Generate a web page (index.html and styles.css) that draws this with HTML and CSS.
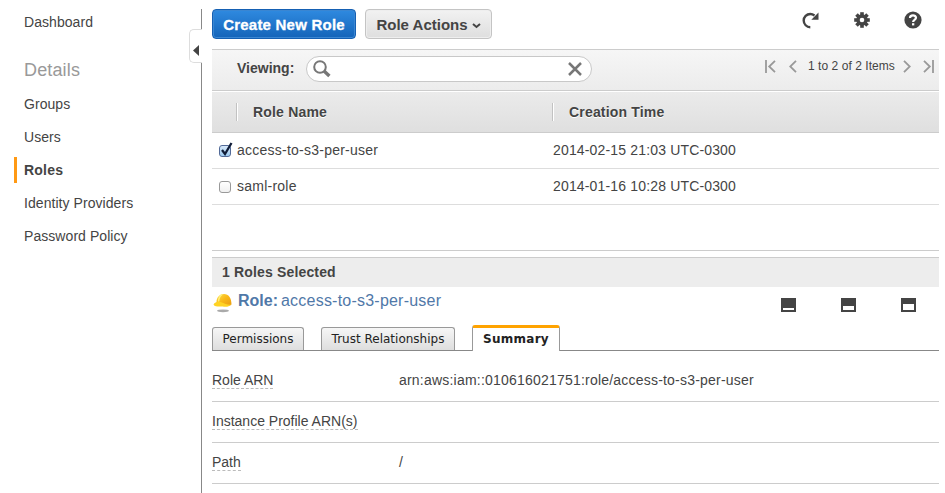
FILE: index.html
```html
<!DOCTYPE html>
<html lang="en">
<head>
<meta charset="utf-8">
<title>IAM Roles</title>
<link rel="stylesheet" href="styles.css">
</head>
<body>
<div class="app">
  <nav class="sidebar">
    <a class="nav-item">Dashboard</a>
    <h2 class="nav-title">Details</h2>
    <a class="nav-item">Groups</a>
    <a class="nav-item">Users</a>
    <a class="nav-item active">Roles</a>
    <a class="nav-item">Identity Providers</a>
    <a class="nav-item">Password Policy</a>
    <div class="collapse"><svg width="6" height="11" viewBox="0 0 6 11"><path d="M6 0v11L0 5.5z" fill="#444"/></svg></div>
  </nav>
  <main class="content">
    <header class="actions">
      <button class="btn primary">Create New Role</button>
      <button class="btn secondary">Role Actions<svg width="9" height="6" viewBox="0 0 9 6"><path d="M1 1l3.5 3L8 1" fill="none" stroke="#444" stroke-width="2"/></svg></button>
      <div class="tools">
        <svg width="17" height="17" viewBox="0 0 17 17"><path d="M8.3 15.2A6.6 6.6 0 0 1 8.3 2Q10.500 2 12.500 3.500" fill="none" stroke="#444" stroke-width="2.4"/><path d="M16.5 0.5v7.2H9.3z" fill="#444"/></svg>
        <svg width="16" height="16" viewBox="-8 -8 16 16"><g fill="#444"><path d="M-1.8-7.8h3.6v15.6h-3.6z"/><path d="M-1.8-7.8h3.6v15.6h-3.6z" transform="rotate(45)"/><path d="M-1.8-7.8h3.6v15.6h-3.6z" transform="rotate(90)"/><path d="M-1.8-7.8h3.6v15.6h-3.6z" transform="rotate(135)"/><circle r="5.7"/></g><circle r="2.3" fill="#fff"/></svg>
        <svg width="18" height="18" viewBox="0 0 18 18"><circle cx="9" cy="9" r="8.6" fill="#444"/><path d="M6 7C6 3.5 12 3.6 12 6.8C12 9 9.1 8.8 9.1 11" fill="none" stroke="#fff" stroke-width="2.2"/><path d="M8 12.2h2.3v2.2H8z" fill="#fff"/></svg>
      </div>
    </header>
    <div class="filter">
      <label class="viewing">Viewing:</label>
      <div class="search">
        <svg width="18" height="18" viewBox="0 0 18 18"><circle cx="7" cy="7" r="5.8" fill="none" stroke="#777" stroke-width="2"/><path d="M11 11l5.4 5" stroke="#777" stroke-width="3.4"/></svg>
        <svg width="14" height="14" viewBox="0 0 14 14"><path d="M1 1l12 12M13 1L1 13" stroke="#777" stroke-width="2.5"/></svg>
      </div>
      <div class="pager">
        <svg width="11" height="13" viewBox="0 0 11 13"><path d="M1 0v13M10 .8L4.2 6.5 10 12.2" fill="none" stroke="#999" stroke-width="1.8"/></svg>
        <svg class="prev" width="8" height="13" viewBox="0 0 8 13"><path d="M7 .8L1.2 6.5 7 12.2" fill="none" stroke="#999" stroke-width="1.8"/></svg>
        <span class="count">1 to 2 of 2 Items</span>
        <svg class="next" width="8" height="13" viewBox="0 0 8 13"><path d="M1 .8l5.8 5.7L1 12.2" fill="none" stroke="#999" stroke-width="1.8"/></svg>
        <svg width="11" height="13" viewBox="0 0 11 13"><path d="M10 0v13M1 .8l5.8 5.7L1 12.2" fill="none" stroke="#999" stroke-width="1.8"/></svg>
      </div>
    </div>
    <div class="table-head">
      <div class="th">Role Name</div>
      <div class="th">Creation Time</div>
    </div>
    <div class="table-body">
      <div class="row"><span class="check checked"><svg width="14" height="15" viewBox="0 0 14 15"><path d="M3 8l3 4L12.5 1" fill="none" stroke="#101c38" stroke-width="2.3"/></svg></span><span class="name">access-to-s3-per-user</span><span class="date">2014-02-15 21:03 UTC-0300</span></div>
      <div class="row"><span class="check"></span><span class="name">saml-role</span><span class="date">2014-01-16 10:28 UTC-0300</span></div>
    </div>
    <div class="selected-bar">1 Roles Selected</div>
    <div class="role-line">
      <svg class="hat" width="19" height="20" viewBox="0 0 19 20"><defs><linearGradient id="dome" x1="0" y1="0" x2="1" y2="1"><stop offset="0" stop-color="#ffe04a"/><stop offset=".5" stop-color="#f9b817"/><stop offset="1" stop-color="#e89a12"/></linearGradient></defs><ellipse cx="10" cy="17.8" rx="6" ry="1.4" fill="#aaa"/><path d="M3.5 9C3.5 4 7 1 11 1c4.500 0 7.500 4 7.500 10.500-1.500 1.500-4 1.500-6.500.500L3 11.500z" fill="url(#dome)"/><path d="M.5 11.500C2 8.500 6 8 9 9.500c3 1.500 6 2.500 9 2-1.500 2-4 2.500-7 2.200C7 13.300 2 14.500.5 11.500z" fill="#ffd323"/><path d="M9 1.300C6.500 3 5.600 5.500 5.600 8.500" fill="none" stroke="#fff07a" stroke-width="1.500"/></svg>
      <div class="role-title"><b>Role:</b><span>access-to-s3-per-user</span></div>
      <div class="panes">
        <svg width="15" height="14"><path d="M0 0h15v14H0z" fill="#444"/><path d="M2 10h11v2H2z" fill="#fff"/></svg>
        <svg width="15" height="14"><path d="M0 0h15v14H0z" fill="#444"/><path d="M2 8h11v4H2z" fill="#fff"/></svg>
        <svg width="15" height="14"><path d="M0 0h15v14H0z" fill="#444"/><path d="M2 6h11v6H2z" fill="#fff"/></svg>
      </div>
    </div>
    <div class="tabs">
      <div class="tab permissions">Permissions</div>
      <div class="tab trust">Trust Relationships</div>
      <div class="tab current">Summary</div>
    </div>
    <dl class="details">
      <div class="detail"><dt><span>Role ARN</span></dt><dd>arn:aws:iam::010616021751:role/access-to-s3-per-user</dd></div>
      <div class="detail"><dt><span>Instance Profile ARN(s)</span></dt><dd></dd></div>
      <div class="detail"><dt><span>Path</span></dt><dd>/</dd></div>
    </dl>
  </main>
</div>
</body>
</html>
```
FILE: styles.css
```css
* { box-sizing: border-box; }
body {
  margin: 0;
  background: #fff;
  color: #444;
  font: 14px/20px "Liberation Sans", Arial, sans-serif;
}
svg { display: block; flex: none; }
.app { display: flex; height: 493px; overflow: hidden; }

.sidebar {
  position: relative;
  width: 202px;
  flex: none;
  margin-top: 9px;
  border-right: 1px solid #888;
}
.nav-item {
  display: block;
  height: 26px;
  margin: 0 0 7px 14px;
  padding-left: 10px;
  line-height: 26px;
  letter-spacing: .06px;
}
.nav-item.active { border-left: 3px solid #ff9914; padding-left: 7px; font-weight: bold; letter-spacing: .2px; }
.nav-title {
  margin: 22px 0 8px 24px;
  font-size: 18px;
  line-height: 26px;
  font-weight: normal;
  letter-spacing: .15px;
  color: #999;
}
.collapse {
  position: absolute;
  left: 189px;
  top: 20px;
  width: 13px;
  height: 34px;
  padding: 15px 0 0 3px;
  border: 1px solid #ddd;
  border-right: 0;
  border-radius: 5px 0 0 5px;
  background: #fff;
}

.content { width: 727px; margin-left: 10px; }
.actions { display: flex; height: 40px; margin-top: 9px; align-items: flex-start; }
.btn {
  display: flex;
  align-items: center;
  justify-content: center;
  height: 30px;
  padding: 2px 0 0;
  border-radius: 4px;
  font: bold 15px/28px "Liberation Sans", Arial, sans-serif;
}
.primary {
  width: 144px;
  border: 1px solid #1560b3;
  background: linear-gradient(#2f8ae0, #1464b9);
  box-shadow: inset 0 0 0 1px #3a86d2;
  color: #fff;
  letter-spacing: .22px;
  -webkit-text-stroke: .3px #fff;
}
.secondary {
  width: 127px;
  margin-left: 9px;
  border: 1px solid #c4c4c4;
  background: linear-gradient(#f2f2f2, #dedede);
  box-shadow: inset 0 0 0 1px #eee;
  color: #444;
}
.secondary svg { margin: 2px 0 0 4px; }
.tools { display: flex; margin-left: auto; align-items: center; height: 22px; }
.tools svg + svg { margin-left: 35px; }
.tools svg:last-child { margin: 0 17px 0 34px; }

.filter {
  display: flex;
  align-items: flex-start;
  height: 42px;
  padding-left: 25px;
  border-top: 1px solid #ccc;
  border-bottom: 1px solid #ccc;
  background: linear-gradient(#f6f6f6, #ececec);
}
.viewing { width: 69px; font-weight: bold; line-height: 37px; }
.search {
  display: flex;
  align-items: center;
  justify-content: space-between;
  width: 286px;
  height: 26px;
  margin-top: 6px;
  padding: 0 9px 0 6px;
  border: 1px solid #c8c8c8;
  border-radius: 13px;
  background: #fff;
}
.pager { display: flex; align-items: center; height: 32px; margin-left: auto; padding-right: 5px; }
.prev { margin-left: 13px; }
.count { width: 87px; margin: 0 8px 0 11px; font-size: 12px; letter-spacing: .05px; white-space: nowrap; }
.next + svg { margin-left: 12px; }

.table-head {
  display: grid;
  grid-template-columns: 316px 1fr;
  height: 42px;
  padding: 11px 0 0 24px;
  border-top: 1px solid #fff;
  border-bottom: 1px solid #ccc;
  background: linear-gradient(#ebebeb, #dfdfdf);
}
.th {
  height: 18px;
  padding-left: 16px;
  border-left: 1px solid #c2c2c2;
  box-shadow: inset 1px 0 #fff;
  font-weight: bold;
  letter-spacing: .18px;
  line-height: 18px;
  text-shadow: 0 1px #fff;
}
.table-body { height: 118px; border-bottom: 1px solid #ccc; }
.row {
  display: grid;
  grid-template-columns: 25px 316px 1fr;
  align-items: start;
  height: 36px;
  border-bottom: 1px solid #ddd;
  line-height: 35px;
}
.name { letter-spacing: .24px; }
.date { letter-spacing: .16px; }
.check {
  width: 12px;
  height: 12px;
  margin: 12px 0 0 7px;
  border: 1px solid #999;
  border-radius: 3px;
  background: linear-gradient(#fff, #f0f0f0);
}
.checked { border-color: #526a98; background: linear-gradient(#d8e9fa, #9ccaf0); }
.checked svg { margin: -4px 0 0 -1px; }

.selected-bar {
  height: 30px;
  margin-top: 6px;
  padding-left: 10px;
  border-top: 1px solid #ccc;
  background: #ededed;
  font-weight: bold;
  letter-spacing: .16px;
  line-height: 29px;
}
.role-line { display: flex; height: 38px; }
.hat { margin: 6px 6px 0 1px; }
.role-title { font-size: 16px; line-height: 28px; color: #5078a8; }
.role-title span { margin-left: 3px; letter-spacing: .22px; }
.panes { display: flex; gap: 45px; margin: 11px 23px 0 auto; }

.tabs {
  display: flex;
  align-items: flex-end;
  height: 26px;
  border-bottom: 1px solid #888;
  font: 12px/22px "DejaVu Sans", sans-serif;
  color: #222;
}
.tab {
  height: 23px;
  border: 1px solid #999;
  border-bottom: 0;
  border-radius: 3px 3px 0 0;
  background: linear-gradient(#f6f6f6, #dedede);
  text-align: center;
  white-space: nowrap;
}
.permissions { width: 92px; }
.trust { width: 134px; margin-left: 17px; }
.current {
  width: 88px;
  height: 26px;
  margin: 0 0 -1px 17px;
  border-top: 3px solid #ffa300;
  background: #fff;
  font-weight: bold;
  letter-spacing: .25px;
}

.details { margin: 10px 0 0; }
.detail { display: flex; height: 41px; border-bottom: 1px solid #ccc; }
dt { width: 187px; line-height: 16px; padding-top: 11px; }
dt span { display: inline-block; border-bottom: 1px dashed #bbb; }
dd { margin: 0; line-height: 39px; letter-spacing: .21px; }
```
